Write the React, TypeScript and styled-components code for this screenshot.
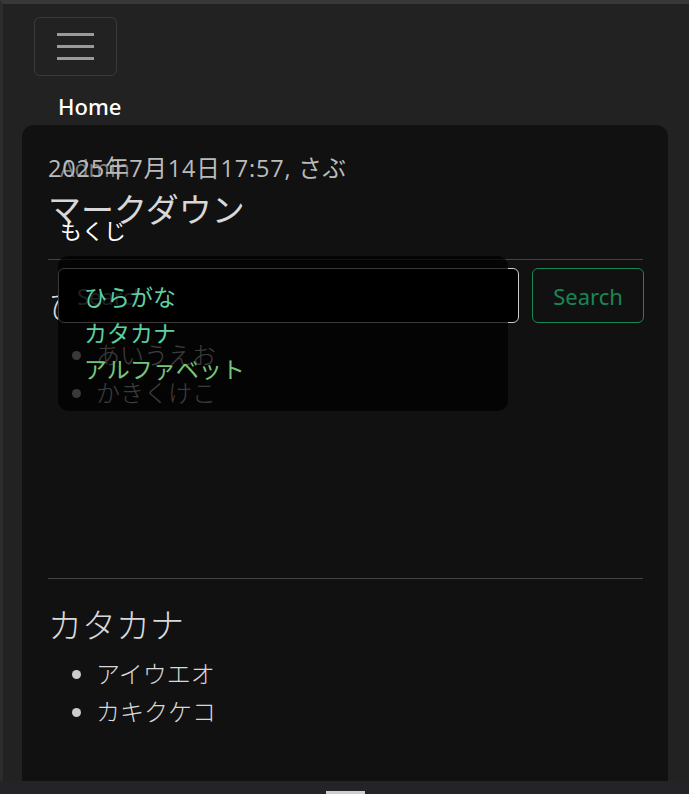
import React from 'react';
import styled, { createGlobalStyle } from 'styled-components';

const jp = `"Open Sans", "Noto Sans CJK JP", sans-serif`;

const GlobalStyle = createGlobalStyle`
  html, body {
    margin: 0;
    padding: 0;
    background: #222222;
    font-family: ${jp};
  }
`;

const Page = styled.div`
  height: 794px;
  box-sizing: border-box;
  border-top: 4px solid #38383a;
  border-left: 3px solid #2c2c2e;
  background: #222222;
  overflow: hidden;
`;

const Navbar = styled.nav`
  display: flex;
  flex-direction: column;
  align-items: flex-start;
  padding: 13px 0 0 31px;
`;

const Toggler = styled.button`
  width: 83px;
  height: 59px;
  display: flex;
  flex-direction: column;
  align-items: center;
  justify-content: center;
  gap: 9px;
  background: transparent;
  border: 1px solid #3a3a3a;
  border-radius: 6px;
  padding: 0;
`;

const Bar = styled.span`
  width: 37px;
  height: 3px;
  background: #9a9a9a;
`;

const NavLink = styled.a`
  margin: 15px 0 0 24px;
  font-family: "Noto Sans", sans-serif;
  font-size: 22px;
  font-weight: 500;
  line-height: 30px;
  color: #ffffff;
  text-decoration: none;
`;

const Card = styled.main`
  position: relative;
  min-height: 720px;
  box-sizing: border-box;
  margin: 4px 21px 0 19px;
  padding: 28px 25px 60px 26px;
  background: #111111;
  border-radius: 12px;
  color: #dddddd;
`;

const Meta = styled.div`
  position: relative;
  z-index: 1;
  font-size: 23.5px;
  letter-spacing: 0.8px;
  line-height: 30px;
  color: #bbbbbb;
`;

const Admin = styled.span`
  position: absolute;
  left: 38px;
  top: 28px;
  font-size: 23px;
  line-height: 30px;
  color: #7c7c7c;
`;

const Title = styled.h1`
  margin: 2px 0 0;
  font-size: 33px;
  font-weight: 400;
  line-height: 50px;
  color: #d8d8d8;
`;

const Rule = styled.hr`
  margin: ${(p: { $top: number }) => p.$top}px 0 0;
  border: 0;
  border-top: 1px solid #444444;
`;

const Heading = styled.h2`
  margin: 24px 0 0;
  font-size: 34px;
  font-weight: 300;
  line-height: 44px;
  color: #d8d8d8;
`;

const List = styled.ul`
  margin: 8px 0 0;
  padding-left: 48px;
  font-size: 24px;
  font-weight: 300;
  line-height: 38px;
  color: #d8d8d8;
  min-height: ${(p: { $min?: number }) => p.$min ?? 0}px;

  li::marker {
    color: #cccccc;
  }
`;

const SearchForm = styled.form`
  position: absolute;
  left: 36px;
  top: 143px;
  display: flex;
  gap: 13px;
  z-index: 2;
`;

const SearchInput = styled.input`
  width: 461px;
  height: 55px;
  box-sizing: border-box;
  padding: 0 18px;
  background: #000000;
  border: 1px solid #cccccc;
  border-radius: 6px;
  font-family: "Noto Sans", sans-serif;
  font-size: 22px;
  color: #dddddd;

  &::placeholder {
    color: #777777;
  }
`;

const SearchButton = styled.button`
  width: 112px;
  height: 55px;
  background: transparent;
  border: 1px solid #198754;
  border-radius: 6px;
  font-family: "Noto Sans", sans-serif;
  font-size: 22px;
  color: #198754;
`;

const TocLabel = styled.div`
  position: absolute;
  z-index: 3;
  left: 38px;
  top: 91px;
  font-size: 22px;
  line-height: 28px;
  color: #ffffff;
`;

const TocBox = styled.nav`
  position: absolute;
  z-index: 3;
  left: 36px;
  top: 131px;
  width: 450px;
  height: 155px;
  box-sizing: border-box;
  padding: 23px 26px;
  background: rgba(0, 0, 0, 0.72);
  border-radius: 10px;
  display: flex;
  flex-direction: column;
`;

const TocLink = styled.a<{ $color: string }>`
  font-size: 23px;
  line-height: 36px;
  color: ${(p) => p.$color};
  text-decoration: none;
`;

const Footer = styled.div`
  position: fixed;
  z-index: 5;
  left: 0;
  right: 0;
  bottom: 0;
  height: 13px;
  background: #232328;
  display: flex;
  justify-content: center;
  align-items: flex-end;
  padding-left: 2px;
`;

const Handle = styled.span`
  width: 39px;
  height: 3px;
  background: #cfcfcf;
`;

const toc = [
  { label: 'ひらがな', color: '#5ccfa3' },
  { label: 'カタカナ', color: '#5ccfa3' },
  { label: 'アルファベット', color: '#74c77a' },
];

export default function App() {
  return (
    <>
      <GlobalStyle />
      <Page>
        <Navbar>
          <Toggler aria-label="menu">
            <Bar />
            <Bar />
            <Bar />
          </Toggler>
          <NavLink href="#">Home</NavLink>
        </Navbar>
        <Card>
          <Admin>Admin</Admin>
          <Meta>2025年7月14日17:57, さぶ</Meta>
          <Title>マークダウン</Title>
          <Rule $top={24} />
          <Heading>ひらがな</Heading>
          <List $min={242}>
            <li>あいうえお</li>
            <li>かきくけこ</li>
          </List>
          <Rule $top={0} />
          <Heading>カタカナ</Heading>
          <List>
            <li>アイウエオ</li>
            <li>カキクケコ</li>
          </List>

          <SearchForm onSubmit={(e) => e.preventDefault()}>
            <SearchInput placeholder="Search" />
            <SearchButton type="submit">Search</SearchButton>
          </SearchForm>
          <TocLabel>もくじ</TocLabel>
          <TocBox>
            {toc.map((t) => (
              <TocLink key={t.label} href="#" $color={t.color}>
                {t.label}
              </TocLink>
            ))}
          </TocBox>
        </Card>
        <Footer>
          <Handle />
        </Footer>
      </Page>
    </>
  );
}
